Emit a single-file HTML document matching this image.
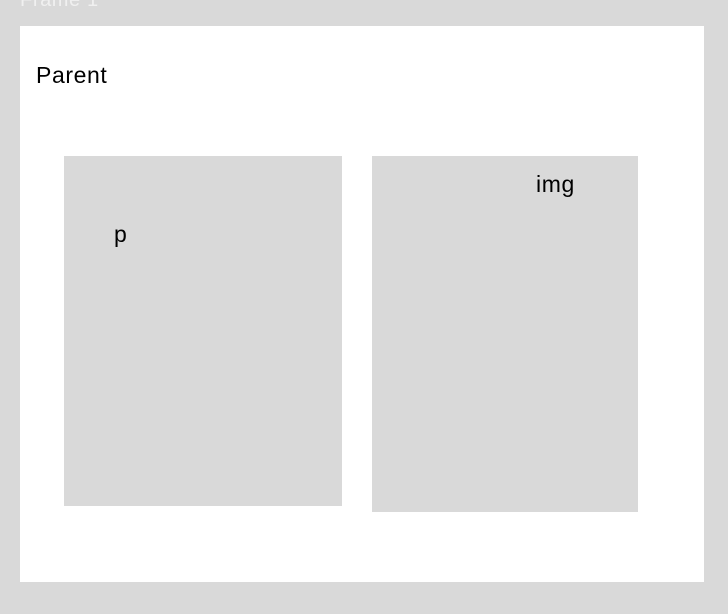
<!DOCTYPE html>
<html><head><style>
html,body{margin:0;padding:0}
body{width:728px;height:614px;background:#d9d9d9;position:relative;overflow:hidden;font-family:"Liberation Sans",sans-serif}
.t{position:absolute;font-size:23px;color:#000;line-height:1;letter-spacing:0.6px}
</style></head><body>
<div class="t" style="left:20px;top:-10px;color:#f0f0f0;font-size:20px">Frame 1</div>
<div style="position:absolute;left:20px;top:26px;width:684px;height:556px;background:#fff"></div>
<div class="t" style="left:36px;top:64px">Parent</div>
<div style="position:absolute;left:64px;top:156px;width:278px;height:350px;background:#d9d9d9"></div>
<div style="position:absolute;left:372px;top:156px;width:266px;height:356px;background:#d9d9d9"></div>
<div class="t" style="left:114px;top:223px">p</div>
<div class="t" style="left:536px;top:173px">img</div>
</body></html>
